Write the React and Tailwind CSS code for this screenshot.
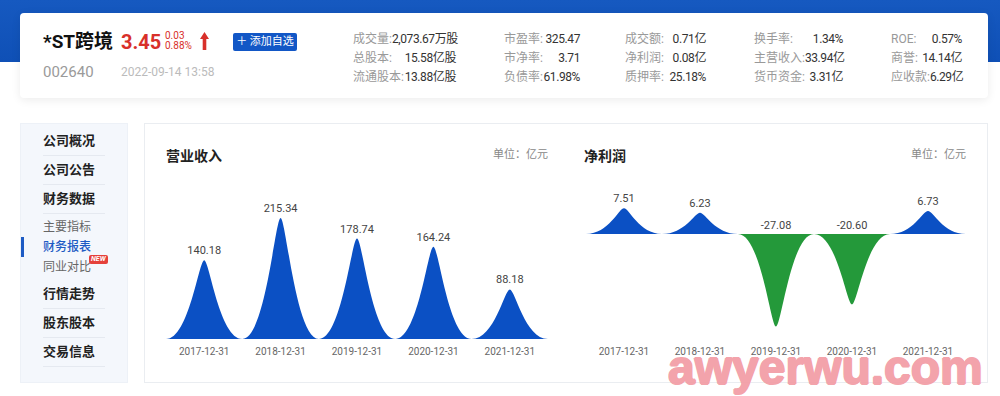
import React from 'react';

const stats = [
    { ml: 'ml-0', w: 'w-[103px]', rows: [['成交量:', '2,073.67万股'], ['总股本:', '15.58亿股'], ['流通股本:', '13.88亿股']] },
    { ml: 'ml-[48px]', w: 'w-[76px]', rows: [['市盈率:', '325.47'], ['市净率:', '3.71'], ['负债率:', '61.98%']] },
    { ml: 'ml-[45px]', w: 'w-[81px]', rows: [['成交额:', '0.71亿'], ['净利润:', '0.08亿'], ['质押率:', '25.18%']] },
    { ml: 'ml-[48px]', w: 'w-[89px]', rows: [['换手率:', '1.34%'], ['主营收入:', '33.94亿'], ['货币资金:', '3.31亿']] },
    { ml: 'ml-[48px]', w: 'w-[71px]', rows: [['ROE:', '0.57%'], ['商誉:', '14.14亿'], ['应收款:', '6.29亿']] },
];

const dates = ['2017-12-31', '2018-12-31', '2019-12-31', '2020-12-31', '2021-12-31'];
const revenue = [140.18, 215.34, 178.74, 164.24, 88.18];
const profit = [7.51, 6.23, -27.08, -20.6, 6.73];

// spike shaped area, h > 0 goes up, h < 0 goes down
const spike = (cx, w, base, h) => {
    const top = base - h;
    const x0 = cx - w / 2;
    const x1 = cx + w / 2;
    return `M${x0},${base} C${cx - 0.2 * w},${base} ${cx - 0.07 * w},${top} ${cx},${top} C${cx + 0.07 * w},${top} ${cx + 0.2 * w},${base} ${x1},${base} Z`;
};

const SpikeChart = ({ values, base, scale, x0 = 0 }) => {
    const w = (382 - x0) / values.length;
    return (
        <svg width="382" height="172" className="block">
            {values.map((v, i) => {
                const cx = x0 + w * i + w / 2;
                const h = v * scale;
                const neg = v < 0;
                return (
                    <g key={i}>
                        <path d={spike(cx, w, base, h)} fill={neg ? '#24993a' : '#0b50c4'} />
                        <text
                            x={cx}
                            y={neg ? base - 5 : base - h - 6}
                            textAnchor="middle"
                            fontSize="11"
                            fill="#444"
                        >
                            {v.toFixed(2)}
                        </text>
                    </g>
                );
            })}
        </svg>
    );
};

const ChartBlock = ({ title, children, pad = '' }) => (
    <div>
        <div className="pt-[22px] flex items-center justify-between h-[42px]">
            <span className="text-[14px] leading-[20px] font-bold text-[#222]">{title}</span>
            <span className="text-[11px] leading-[16px] text-[#888] -mt-[3px]">单位：亿元</span>
        </div>
        <div className="mt-[4px]">{children}</div>
        <div className={`mt-[3px] grid grid-cols-5 text-[10px] leading-[14px] text-[#666] text-center whitespace-nowrap ${pad}`}>
            {dates.map(d => <span key={d}>{d}</span>)}
        </div>
    </div>
);

const MainItem = ({ label }) => (
    <div className="pl-[22px]">
        <div className="w-[62px] h-[29px] flex items-center border-b border-[#e5e9f0] text-[13px] font-bold text-[#222]">
            {label}
        </div>
    </div>
);

const App = () => {
    return (
        <div className="relative w-[1000px] h-[396px] overflow-hidden font-['Roboto','Noto_Sans_CJK_SC',sans-serif] bg-[linear-gradient(to_bottom,#1659c0_0px,#0f50b6_62px,#ffffff_62px)] pt-[13px]">
            {/* stock header card */}
            <div className="ml-[20px] w-[968px] h-[85px] rounded-[4px] bg-white shadow-[0_2px_10px_rgba(0,0,0,0.08)] flex">
                <div className="w-[333px] shrink-0 pl-[23px] pt-[17px]">
                    <div className="flex items-center h-[24px]">
                        <span className="w-[78px] shrink-0 text-[19px] leading-[24px] font-bold text-[#111] whitespace-nowrap">*ST跨境</span>
                        <span className="w-[44px] shrink-0 text-[20px] leading-[24px] font-bold text-[#d8302a]">3.45</span>
                        <div className="w-[35px] shrink-0 text-[10px] leading-[10px] text-[#d8302a] -mt-[3px]">
                            <div>0.03</div>
                            <div>0.88%</div>
                        </div>
                        <svg width="9" height="18" viewBox="0 0 9 18" className="shrink-0 -mt-[2px]">
                            <path d="M4.5 0 L9 7 L6.3 7 L6.3 18 L2.7 18 L2.7 7 L0 7 Z" fill="#d8302a" />
                        </svg>
                        <button className="ml-[24px] shrink-0 h-[18px] w-[64px] rounded-[2px] bg-[#1257c6] text-white text-[11px] leading-[18px] text-center">
                            ＋ 添加自选
                        </button>
                    </div>
                    <div className="mt-[6px] flex items-center h-[24px]">
                        <span className="w-[78px] text-[15px] text-[#9a9a9a]">002640</span>
                        <span className="text-[12px] text-[#bbbbbb]">2022-09-14 13:58</span>
                    </div>
                </div>
                <div className="flex pt-[16px]">
                    {stats.map((col, i) => (
                        <div key={i} className={`${col.ml} ${col.w} shrink-0`}>
                            {col.rows.map(([k, v]) => (
                                <div key={k} className="flex justify-between h-[19px] items-center text-[12px] whitespace-nowrap">
                                    <span className="text-[#999]">{k}</span>
                                    <span className="text-[#333] tracking-[-0.4px]">{v}</span>
                                </div>
                            ))}
                        </div>
                    ))}
                </div>
            </div>

            {/* lower section */}
            <div className="mt-[25px] ml-[20px] flex gap-[16px]">
                <aside className="w-[108px] shrink-0 h-[260px] bg-[#f4f7fc] border border-[#edf1f7] pt-[3px]">
                    {['公司概况', '公司公告', '财务数据'].map(t => <MainItem key={t} label={t} />)}
                    <div className="py-[3px] text-[12px]">
                        <div className="h-[20px] flex items-center pl-[22px] text-[#666]">主要指标</div>
                        <div className="h-[20px] flex items-center pl-[19px] border-l-[3px] border-[#1d5bc4] text-[#1d5bc4] font-medium">财务报表</div>
                        <div className="h-[20px] flex items-center pl-[22px] text-[#666]">
                            <span className="relative">
                                同业对比
                                <span className="absolute left-full -top-[3px] -ml-[2px] h-[9px] px-[2px] rounded-[2px] bg-[#e5413b] text-white text-[7px] leading-[9px] italic font-bold">NEW</span>
                            </span>
                        </div>
                    </div>
                    {['行情走势', '股东股本', '交易信息'].map(t => <MainItem key={t} label={t} />)}
                </aside>

                <div className="w-[844px] shrink-0 h-[260px] border border-[#eaedf1] bg-white px-[21px] grid grid-cols-2 gap-x-[36px]">
                    <ChartBlock title="营业收入">
                        <SpikeChart values={revenue} base={169} scale={0.562} />
                    </ChartBlock>
                    <ChartBlock title="净利润" pad="pl-[2px]">
                        <SpikeChart values={profit} base={64} scale={3.42} x0={2} />
                    </ChartBlock>
                </div>
            </div>

            {/* watermark */}
            <div className="absolute left-[668px] top-[344px] text-[48px] leading-none font-bold text-[#f29aa3] opacity-90 [text-shadow:1px_0_0_#f29aa3,-1px_0_0_#f29aa3,0_1px_0_#f29aa3,0_-1px_0_#f29aa3] font-['Liberation_Sans',sans-serif]">
                awyerwu.com
            </div>
        </div>
    );
};

export default App;
